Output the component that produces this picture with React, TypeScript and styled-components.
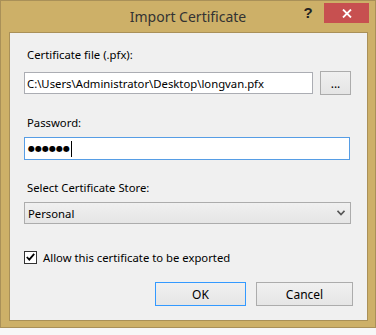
import React from 'react';
import styled, { createGlobalStyle } from 'styled-components';

const frameColor = '#CDB068';
const frameEdge = '#A99058';
const panelColor = '#F0F0F0';
const uiFont = `'Noto Sans', 'Liberation Sans', sans-serif`;

const GlobalStyle = createGlobalStyle`
  html, body {
    margin: 0;
    padding: 0;
    background: #f7f7f7;
  }
  * {
    box-sizing: border-box;
  }
`;

const Window = styled.div`
  width: 376px;
  height: 328px;
  background: ${frameColor};
  border: 1px solid ${frameEdge};
  display: flex;
  flex-direction: column;
  font-family: ${uiFont};
`;

const TitleBar = styled.div`
  height: 31px;
  display: flex;
  align-items: flex-start;
  position: relative;
`;

const Title = styled.div`
  position: absolute;
  left: 0;
  right: 0;
  top: 7px;
  text-align: center;
  font-size: 14px;
  line-height: 18px;
  color: #333333;
`;

const Controls = styled.div`
  margin-left: auto;
  margin-right: 6px;
  margin-top: 2px;
  display: flex;
  align-items: flex-start;
  gap: 6px;
  position: relative;
`;

const HelpButton = styled.div`
  width: 20px;
  height: 20px;
  font-family: 'Liberation Sans', sans-serif;
  font-weight: bold;
  font-size: 15px;
  line-height: 20px;
  text-align: center;
  color: #222;
`;

const CloseButton = styled.div`
  width: 45px;
  height: 20px;
  background: #C75050;
  display: flex;
  align-items: center;
  justify-content: center;
`;

const Panel = styled.div`
  flex: 1;
  margin: 0 7px 6px 8px;
  background: ${panelColor};
  border: 1px solid ${frameEdge};
  padding: 14px 0 0 14px;
  display: flex;
  flex-direction: column;
  font-size: 11.3px;
`;

const Label = styled.div<{ $gap: number }>`
  margin-top: ${(p) => p.$gap}px;
  padding-left: 3px;
  line-height: 16px;
  color: #000;
`;

const FileRow = styled.div`
  margin-top: 8px;
  display: flex;
  align-items: center;
  gap: 7px;
  height: 24px;
`;

const TextBox = styled.div<{ $width: number; $height: number; $focused?: boolean }>`
  width: ${(p) => p.$width}px;
  height: ${(p) => p.$height}px;
  background: #fff;
  border: 1px solid ${(p) => (p.$focused ? '#569DE5' : '#ABADB3')};
  padding-left: 2px;
  display: flex;
  align-items: center;
  color: #000;
  white-space: nowrap;
  overflow: hidden;
`;

const PasswordBox = styled(TextBox)`
  margin-top: 6px;
`;

const Dots = styled.span`
  font-family: 'DejaVu Sans', sans-serif;
  font-size: 8px;
  letter-spacing: 0;
  padding-left: 1px;
`;

const Caret = styled.span`
  display: inline-block;
  width: 1px;
  height: 16px;
  background: #000;
  margin-left: 1px;
`;

const PushButton = styled.div<{ $width: number; $default?: boolean }>`
  width: ${(p) => p.$width}px;
  height: 24px;
  border: 1px solid ${(p) => (p.$default ? '#3399FF' : '#ACACAC')};
  background: linear-gradient(#F0F0F0, #E5E5E5);
  display: flex;
  align-items: center;
  justify-content: center;
  font-size: 12px;
  color: #000;
`;

const Select = styled.div`
  margin-top: 6px;
  width: 327px;
  height: 22px;
  border: 1px solid #ACACAC;
  background: linear-gradient(#F0F0F0, #E5E5E5);
  display: flex;
  align-items: center;
  padding: 0 5px 0 3px;
  color: #000;
`;

const SelectValue = styled.span`
  flex: 1;
`;

const CheckRow = styled.div`
  margin-top: 25px;
  display: flex;
  align-items: center;
  gap: 6px;
  height: 16px;
  font-size: 11.3px;
  color: #000;
`;

const CheckBox = styled.div`
  width: 13px;
  height: 13px;
  border: 1px solid #333;
  background: #fff;
  display: flex;
  align-items: center;
  justify-content: center;
`;

const ButtonRow = styled.div`
  margin-top: 17px;
  display: flex;
  gap: 10px;
  padding-left: 131px;
`;

const App: React.FC = () => {
  return (
    <>
      <GlobalStyle />
      <Window>
        <TitleBar>
          <Title>Import Certificate</Title>
          <Controls>
            <HelpButton>?</HelpButton>
            <CloseButton>
              <svg width="10" height="9" viewBox="0 0 10 9">
                <path d="M1 0.5 L9 8.5 M9 0.5 L1 8.5" stroke="#fff" strokeWidth="1.8" />
              </svg>
            </CloseButton>
          </Controls>
        </TitleBar>
        <Panel>
          <Label $gap={0}>Certificate file (.pfx):</Label>
          <FileRow>
            <TextBox $width={289} $height={22}>
              C:\Users\Administrator\Desktop\longvan.pfx
            </TextBox>
            <PushButton $width={31}>...</PushButton>
          </FileRow>
          <Label $gap={20}>Password:</Label>
          <PasswordBox $width={326} $height={23} $focused>
            <Dots>●●●●●●</Dots>
            <Caret />
          </PasswordBox>
          <Label $gap={20}>Select Certificate Store:</Label>
          <Select>
            <SelectValue>Personal</SelectValue>
            <svg width="8" height="6" viewBox="0 0 8 6">
              <path d="M0.5 0.8 L4 4.6 L7.5 0.8" stroke="#555" strokeWidth="1.6" fill="none" />
            </svg>
          </Select>
          <CheckRow>
            <CheckBox>
              <svg width="9" height="8" viewBox="0 0 9 8">
                <path d="M0.8 4 L3.3 6.6 L8.2 0.8" stroke="#000" strokeWidth="1.8" fill="none" />
              </svg>
            </CheckBox>
            Allow this certificate to be exported
          </CheckRow>
          <ButtonRow>
            <PushButton $width={91} $default>OK</PushButton>
            <PushButton $width={97}>Cancel</PushButton>
          </ButtonRow>
        </Panel>
      </Window>
    </>
  );
};

export default App;
